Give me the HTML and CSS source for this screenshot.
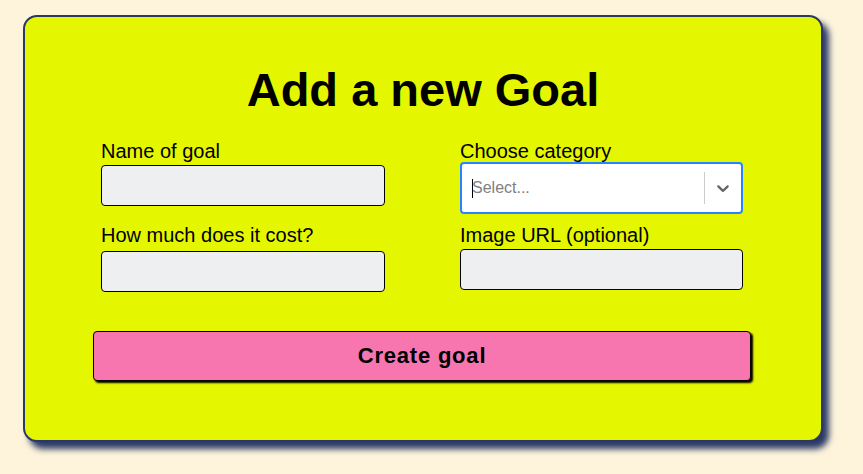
FILE: index.html
```html
<!DOCTYPE html>
<html lang="en">
<head>
<meta charset="utf-8">
<title>Add a new Goal</title>
<link rel="stylesheet" href="styles.css">
</head>
<body>
  <div class="card">
    <h1 class="title">Add a new Goal</h1>
    <form class="form">
      <div class="grid">
        <div class="field">
          <label class="label">Name of goal</label>
          <input class="input" type="text">
        </div>
        <div class="field">
          <label class="label">Choose category</label>
          <div class="select">
            <div class="select-value"><span class="caret"></span><span class="placeholder">Select...</span></div>
            <span class="separator"></span>
            <span class="indicator">
              <svg width="20" height="20" viewBox="0 0 20 20" aria-hidden="true"><path fill="#666" d="M4.516 7.548c0.436-0.446 1.043-0.481 1.576 0l3.908 3.747 3.908-3.747c0.533-0.481 1.141-0.446 1.574 0 0.436 0.445 0.408 1.197 0 1.615-0.406 0.418-4.695 4.502-4.695 4.502-0.217 0.223-0.502 0.335-0.787 0.335s-0.57-0.112-0.789-0.335c0 0-4.287-4.084-4.695-4.502s-0.436-1.170 0-1.615z"/></svg>
            </span>
          </div>
        </div>
        <div class="field">
          <label class="label">How much does it cost?</label>
          <input class="input input-lower" type="text">
        </div>
        <div class="field">
          <label class="label">Image URL (optional)</label>
          <input class="input" type="text">
        </div>
      </div>
      <button class="button" type="button">Create goal</button>
    </form>
  </div>
</body>
</html>
```
FILE: styles.css
```css
html, body {
  margin: 0;
  padding: 0;
}
body {
  box-sizing: border-box;
  min-height: 474px;
  background: #fdf4db;
  font-family: "Liberation Sans", Arial, sans-serif;
  color: #000;
  padding: 15px 0 0 23px;
}
.card {
  box-sizing: border-box;
  width: 800px;
  height: 427px;
  background: #e5f700;
  border: 2px solid #2b3766;
  border-radius: 14px;
  box-shadow: 6px 7px 6px #2c3a66;
  padding: 46px 0 0 76px;
}
.title {
  margin: 0 0 0 -76px;
  font-size: 47px;
  line-height: 54px;
  font-weight: 700;
  text-align: center;
}
.form {
  margin: 23px 0 0;
  width: 642px;
}
.grid {
  display: grid;
  grid-template-columns: 284px 283px;
  column-gap: 75px;
  row-gap: 10px;
  align-items: start;
}
.field {
  display: flex;
  flex-direction: column;
}
.label {
  font-size: 20px;
  line-height: 23px;
  display: block;
}
.input {
  box-sizing: border-box;
  height: 41px;
  margin: 2px 0 0;
  border: 1px solid #000;
  border-radius: 4px;
  background: #eeeff1;
  padding: 0 8px;
  font: inherit;
}
.input-lower {
  margin-top: 4px;
}
.select {
  box-sizing: border-box;
  height: 52px;
  margin-top: -1px;
  border: 2px solid #2684ff;
  border-radius: 4px;
  background: #fff;
  display: flex;
  align-items: center;
}
.select-value {
  flex: 1;
  display: flex;
  align-items: center;
  padding-left: 10px;
}
.caret {
  width: 1px;
  height: 19px;
  background: #000;
  margin-right: -1px;
}
.placeholder {
  font-size: 16px;
  color: #808080;
}
.separator {
  align-self: stretch;
  width: 1px;
  margin: 8px 0;
  background: #ccc;
}
.indicator {
  display: flex;
  padding: 0 8px;
}
.button {
  display: block;
  box-sizing: border-box;
  width: 658px;
  height: 50px;
  margin: 39px 0 0 -8px;
  background: #f776b0;
  border: 1px solid #000;
  border-radius: 4px;
  box-shadow: 2px 2px 2px #000;
  font-family: "Liberation Sans", Arial, sans-serif;
  font-size: 22px;
  font-weight: 700;
  letter-spacing: 0.8px;
  color: #000;
  padding: 0;
}
```
